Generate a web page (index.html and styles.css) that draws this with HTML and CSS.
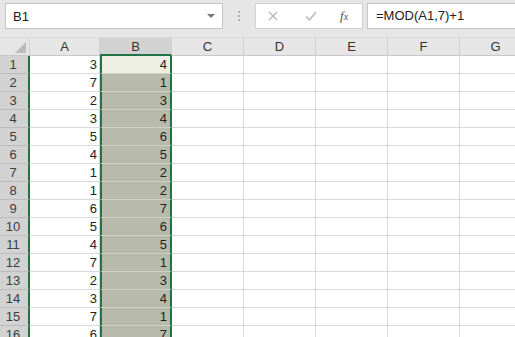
FILE: index.html
```html
<!DOCTYPE html>
<html lang="ja">
<head>
  <meta charset="UTF-8">
  <title>Book1 - Excel</title>
  <link rel="stylesheet" href="styles.css">
</head>
<body>
  <div class="toolbar">
    <div class="namebox">
      <span class="name">B1</span>
      <span class="caret"></span>
    </div>
    <div class="grip"><i></i><i></i><i></i></div>
    <div class="fbtns">
      <svg class="btn-x" width="10" height="10" viewBox="0 0 10 10"><path d="M1 1L9 9M9 1L1 9" stroke="#b4b4b4" stroke-width="1.2" fill="none"/></svg>
      <svg class="btn-ok" width="12" height="10" viewBox="0 0 12 10"><path d="M1 5.5L4.5 9L11 1" stroke="#b4b4b4" stroke-width="1.3" fill="none"/></svg>
      <span class="fx">f<sub>x</sub></span>
    </div>
    <div class="formula">=MOD(A1,7)+1</div>
  </div>

  <div class="sheet" id="sheet">
    <div class="hd corner"><span class="tri"></span></div>
    <div class="hd">A</div>
    <div class="hd sel">B</div>
    <div class="hd">C</div>
    <div class="hd">D</div>
    <div class="hd">E</div>
    <div class="hd">F</div>
    <div class="hd">G</div>
  </div>

  <script>
    const a = [3, 7, 2, 3, 5, 4, 1, 1, 6, 5, 4, 7, 2, 3, 7, 6];
    const sheet = document.getElementById('sheet');
    a.forEach((v, i) => {
      let html = '<div class="rh">' + (i + 1) + '</div>';
      html += '<div class="c num">' + v + '</div>';
      html += '<div class="c num b' + (i === 0 ? ' active' : '') + '">' + (v % 7 + 1) + '</div>';
      for (let k = 0; k < 5; k++) html += '<div class="c"></div>';
      sheet.insertAdjacentHTML('beforeend', html);
    });
  </script>
</body>
</html>
```

FILE: styles.css
```css
body {
  margin: 0;
  width: 515px;
  height: 337px;
  overflow: hidden;
  background: #fff;
  font-family: 'Liberation Sans', Arial, sans-serif;
  color: #222;
}
.toolbar {
  height: 38px;
  background: #e6e6e6;
  display: flex;
  align-items: flex-start;
  padding: 3px 0 0 5px;
  box-sizing: border-box;
  border-bottom: 1px solid #dadada;
}
.namebox {
  width: 218px;
  height: 26px;
  box-sizing: border-box;
  background: #fff;
  border: 1px solid #c6c6c6;
  display: flex;
  align-items: center;
  justify-content: space-between;
  padding: 0 7px 0 7px;
  font-size: 13px;
  color: #222;
}
.caret {
  width: 0;
  height: 0;
  border-left: 4px solid transparent;
  border-right: 4px solid transparent;
  border-top: 4px solid #777;
}
.grip {
  width: 32px;
  height: 26px;
  display: flex;
  flex-direction: column;
  align-items: center;
  justify-content: center;
  gap: 2px;
}
.grip i {
  width: 2px;
  height: 2px;
  background: #b0b0b0;
}
.fbtns {
  width: 108px;
  height: 26px;
  box-sizing: border-box;
  background: #fff;
  border: 1px solid #d2d2d2;
  display: flex;
  align-items: center;
  padding-left: 12px;
}
.btn-x {
  margin-right: 27px;
}
.btn-ok {
  margin-right: 23px;
}
.fx {
  font-family: 'Liberation Serif', serif;
  font-style: italic;
  font-size: 13px;
  color: #555;
}
.fx sub {
  font-size: 10px;
  vertical-align: 0;
}
.formula {
  flex: 1;
  height: 26px;
  margin-left: 4px;
  box-sizing: border-box;
  background: #fff;
  border: 1px solid #c6c6c6;
  border-right: none;
  font-size: 13px;
  line-height: 24px;
  padding-left: 8px;
  color: #222;
}
.sheet {
  display: grid;
  grid-template-columns: 30px 70px repeat(6, 72px);
  grid-template-rows: 18px;
  grid-auto-rows: 18px;
  font-size: 13px;
}
.sheet > div {
  box-sizing: border-box;
  border-right: 1px solid #d9d9d9;
  border-bottom: 1px solid #d9d9d9;
  overflow: hidden;
  white-space: nowrap;
}
.hd {
  background: #e6e6e6;
  text-align: center;
  line-height: 17px;
  color: #333;
  border-right-color: #d0d0d0 !important;
  border-bottom-color: #c8c8c8 !important;
}
.hd.sel {
  background: #d2d2d2;
  border-bottom: 2px solid #217346 !important;
  color: #2a3a30;
}
.corner {
  position: relative;
}
.tri {
  position: absolute;
  right: 3px;
  bottom: 2px;
  width: 0;
  height: 0;
  border-left: 11px solid transparent;
  border-bottom: 11px solid #b9b9b9;
}
.rh {
  background: #d2d2d2;
  text-align: center;
  padding-right: 2px;
  line-height: 18px;
  color: #3c3c3c;
  border-right: 2px solid #217346 !important;
  border-bottom-color: #bcbcbc !important;
}
.c {
  line-height: 17px;
}
.num {
  text-align: right;
  padding-right: 2px;
}
.b {
  background: #b8bbac;
  border-left: 2px solid #217346;
  border-right: 2px solid #217346 !important;
  border-bottom-color: #cdcfc3 !important;
  padding-right: 3px;
}
.b.active {
  background: #eef0e3;
}
```
